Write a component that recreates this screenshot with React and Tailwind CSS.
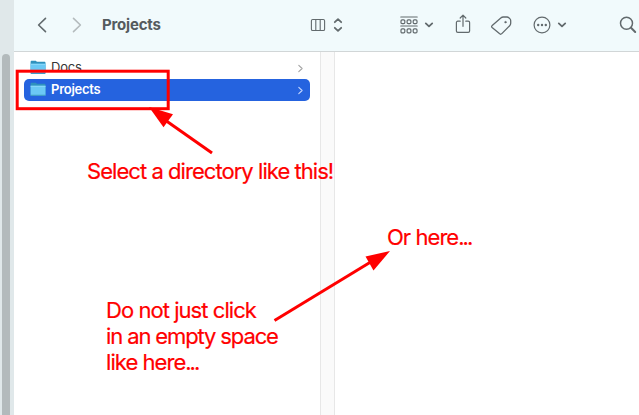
const stroke = {
  fill: "none",
  stroke: "currentColor",
  strokeLinecap: "round",
  strokeLinejoin: "round",
};

function Chevron({ direction, className }) {
  return (
    <svg width="10" height="16" viewBox="0 0 10 16" className={className} {...stroke} strokeWidth="1.6">
      <path d={direction === "left" ? "M8.5 1.4 1.6 8l6.9 6.6" : "M1.5 1.4 8.4 8l-6.9 6.6"} />
    </svg>
  );
}

function DownChevron({ className }) {
  return (
    <svg width="10" height="8" viewBox="0 0 10 8" className={className} {...stroke} strokeWidth="1.8">
      <path d="m1.8 2.4 3.2 3 3.2-3" />
    </svg>
  );
}

function ColumnsIcon({ className }) {
  return (
    <svg width="16" height="14" viewBox="0 0 16 14" className={className} {...stroke} strokeWidth="1.1">
      <rect x="1.4" y="1.5" width="13.2" height="11" rx="1.3" />
      <path d="M5.8 1.5v11M10.2 1.5v11" />
    </svg>
  );
}

function UpDownIcon({ className }) {
  return (
    <svg width="10" height="16" viewBox="0 0 10 16" className={className} {...stroke} strokeWidth="1.8">
      <path d="M1.8 5.2 5 2.2l3.2 3M1.8 10.8l3.2 3 3.2-3" />
    </svg>
  );
}

function GroupIcon({ className }) {
  return (
    <svg width="18" height="18" viewBox="0 0 18 18" className={className} {...stroke} strokeWidth="1.2">
      <path d="M.8 1h16.4M.8 10h16.4" />
      {[3.8, 12.9].map((y) =>
        [1, 7.1, 13.2].map((x) => (
          <rect key={`${x}-${y}`} x={x} y={y} width="3.8" height="3.9" rx="1.1" />
        )),
      )}
    </svg>
  );
}

function ShareIcon({ className }) {
  return (
    <svg width="16" height="20" viewBox="0 0 16 20" className={className} {...stroke} strokeWidth="1.2">
      <path d="M5.2 7.2H2.8c-.9 0-1.4.5-1.4 1.4v8.3c0 .9.5 1.4 1.4 1.4h10.4c.9 0 1.4-.5 1.4-1.4V8.6c0-.9-.5-1.4-1.4-1.4h-2.4" />
      <path d="M8 12.3V1.3M5.2 4 8 1.2 10.8 4" />
    </svg>
  );
}

function TagIcon({ className }) {
  return (
    <svg width="22" height="20" viewBox="0 0 22 20" className={className} {...stroke} strokeWidth="1.3">
      <path d="M2.200 9.500 10.800 2c.8-.7 1.500-1 2.500-1H17c.7 0 1.300.2 1.800.7L20 2.900c.5.500.7 1.100.7 1.800v2.600c0 1-.3 1.700-1 2.400l-7.900 7.900c-.8.8-1.600.8-2.400 0l-7.300-6.100c-.7-.7-.7-1.400.1-2Z" />
      <circle cx="15.500" cy="6.200" r=".9" fill="currentColor" strokeWidth=".4" />
    </svg>
  );
}

function MoreIcon({ className }) {
  return (
    <svg width="18" height="18" viewBox="0 0 18 18" className={className} {...stroke} strokeWidth="1.2">
      <circle cx="9" cy="9" r="7.9" />
      {[5.2, 9, 12.8].map((x) => (
        <circle key={x} cx={x} cy="9" r="1.2" fill="currentColor" stroke="none" />
      ))}
    </svg>
  );
}

function SearchIcon({ className }) {
  return (
    <svg width="18" height="18" viewBox="0 0 18 18" className={className} {...stroke}>
      <circle cx="7.5" cy="7.3" r="6" strokeWidth="1.5" />
      <path d="m12 11.8 4.2 4.2" strokeWidth="2" />
    </svg>
  );
}

function Folder() {
  return (
    <svg width="16" height="15" viewBox="0 0 16 15" className="mb-px shrink-0">
      <path d="M.6 2.1C.6 1.2 1 .8 1.8.8h3.400c.5 0 .8.1 1.100.4l.7.6h7.300c.8 0 1.200.4 1.200 1.200v9.700H.6Z" fill="#2f91bd" />
      <path d="M.6 3.800h14.900v9c0 .8-.4 1.200-1.200 1.200H1.800c-.8 0-1.200-.4-1.200-1.200Z" fill="#6bc8f5" />
      <path d="M.6 3.800h14.900v1H.6Z" fill="#8cdafa" />
      <path d="M.6 12.800h14.900c0 .8-.4 1.200-1.200 1.200H1.800c-.8 0-1.200-.4-1.200-1.200Z" fill="#3f9dc8" />
    </svg>
  );
}

function Row({ name, selected }) {
  return (
    <div
      className={`flex h-[22px] items-center rounded-[5px] pl-1.5 pr-1.5 text-[13px] ${
        selected ? "bg-[#2563df] font-semibold text-white" : "font-normal text-[#353535]"
      }`}
    >
      <Folder />
      <span className={`ml-[5px] ${selected ? "tracking-[-0.25px]" : "tracking-[-0.2px]"}`}>{name}</span>
      <svg width="7" height="9" viewBox="0 0 7 9" className={`ml-auto ${selected ? "text-[#c5d7ff]" : "text-[#a3a3a3]"}`} {...stroke} strokeWidth="1.1">
        <path d="m1.8 1.3 3.3 3.2-3.3 3.2" />
      </svg>
    </div>
  );
}

const note =
  "absolute whitespace-nowrap text-[22px] leading-[26px] tracking-[-0.95px] text-[#ff0000] [-webkit-text-stroke:0.2px_#ff0000]";

export default function App() {
  return (
    <div className="relative flex h-[415px] w-[639px] overflow-hidden bg-white font-['Inter','Liberation_Sans',sans-serif]">
      <aside className="flex w-3.5 shrink-0 bg-[#e0e8ea] pl-0.5 pt-[54px]">
        <div className="w-2 rounded-t-full bg-[#b3babc]" />
      </aside>

      <main className="flex min-w-0 flex-1 flex-col">
        <header className="flex h-[52px] shrink-0 items-center border-b border-[#d1d6d7] bg-[#f1fafc] pb-0.5 text-[#626a6d]">
          <Chevron direction="left" className="ml-[23px] shrink-0" />
          <Chevron direction="right" className="ml-[25px] shrink-0 text-[#b4bbbd]" />
          <h1 className="ml-5 w-[59px] shrink-0 whitespace-nowrap pt-0.5 text-[15px] font-bold tracking-[-0.2px] text-[#555b5e]">Projects</h1>
          <ColumnsIcon className="ml-[149px] shrink-0" />
          <UpDownIcon className="ml-[7px] shrink-0" />
          <GroupIcon className="ml-[57px] shrink-0" />
          <DownChevron className="ml-[6px] shrink-0" />
          <ShareIcon className="mb-0.5 ml-[21px] shrink-0" />
          <TagIcon className="ml-[19px] mt-0.5 shrink-0" />
          <MoreIcon className="ml-[21px] shrink-0" />
          <DownChevron className="ml-[6px] shrink-0" />
          <SearchIcon className="ml-[52px] shrink-0" />
        </header>

        <div className="flex min-h-0 flex-1">
          <section className="w-[306px] px-2.5 pt-[5px]">
            <Row name="Docs" />
            <Row name="Projects" selected />
          </section>
          <div className="w-[15px] border-x border-[#e7e7e7] bg-[#fafafa]" />
          <section className="flex-1" />
        </div>
      </main>

      <svg className="absolute inset-0 text-[#ff0000]" width="639" height="415" viewBox="0 0 639 415" fill="currentColor">
        <rect x="17.2" y="71.2" width="151" height="37.5" fill="none" stroke="currentColor" strokeWidth="3" />
        <path d="M212 153 165 120" fill="none" stroke="currentColor" strokeWidth="3" />
        <path d="m149 107 24 7.2-9.5 13Z" />
        <path d="m274.5 320.5 97-59" fill="none" stroke="currentColor" strokeWidth="3" />
        <path d="m390 251-24.5 5.500 8 14Z" />
      </svg>
      <p className={`${note} left-[87px] top-[158px]`}>Select a directory like this!</p>
      <p className={`${note} left-[387px] top-[224px]`}>
        Or here<span className="tracking-[-2px]">...</span>
      </p>
      <p className={`${note} left-[106px] top-[297px]`}>
        Do not just click
        <br />
        <span className="tracking-[-1.12px]">in an empty space</span>
        <br />
        like here<span className="tracking-[-2px]">...</span>
      </p>
    </div>
  );
}
